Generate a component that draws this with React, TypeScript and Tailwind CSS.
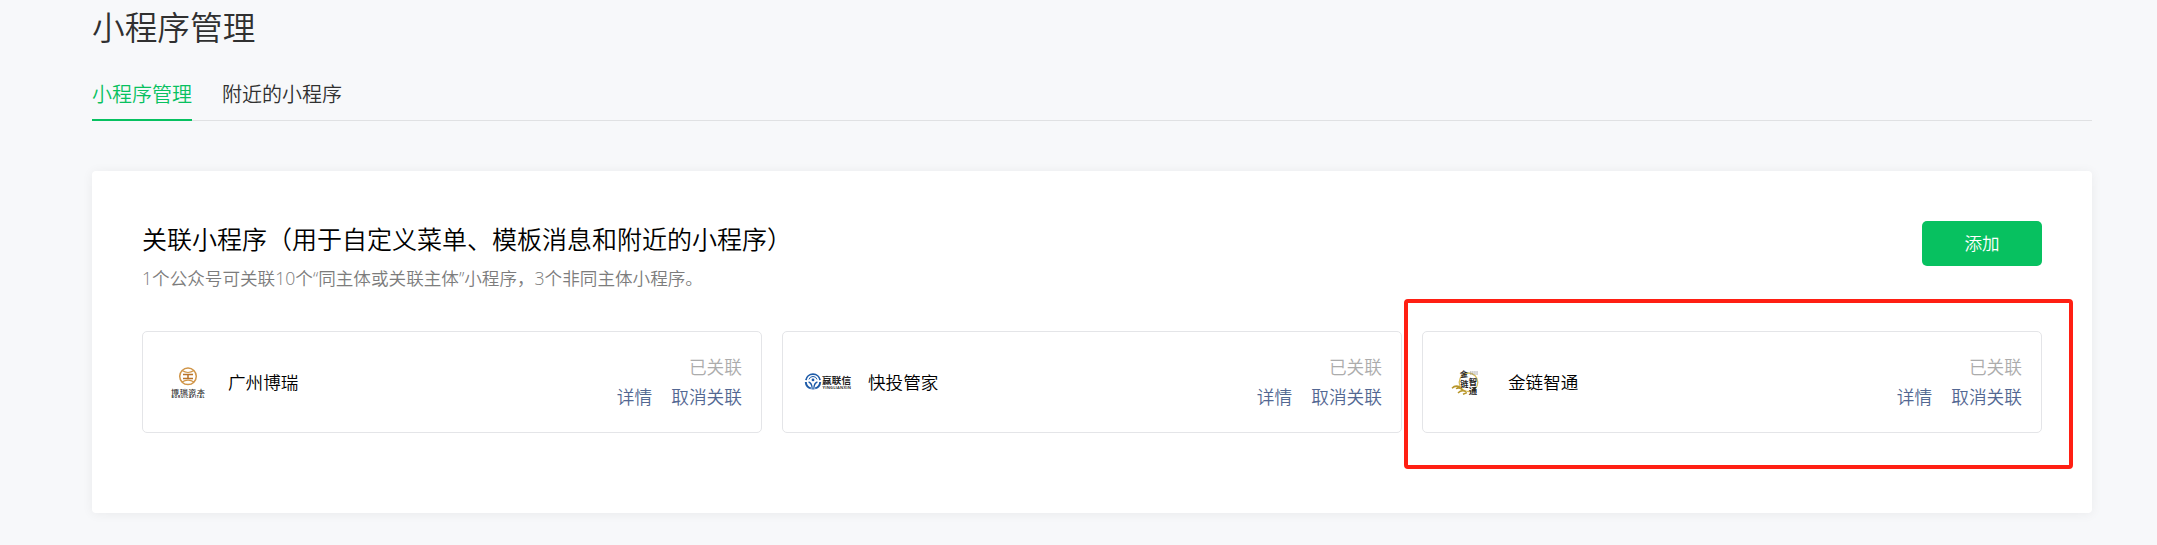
import * as React from 'react';

function BoruiLogo() {
    return (
        <svg viewBox="0 0 50 50" className="w-[50px] h-[50px] shrink-0">
            <circle cx="25" cy="19.3" r="8.3" fill="none" stroke="#d09548" strokeWidth="1.5" />
            <path d="M19 13.6Q25 17.4 31 13.6M19 25Q25 21.2 31 25" fill="none" stroke="#d09548" strokeWidth="1.2" />
            <path d="M20 17.6h10M20 21.4h10M25 17.6v3.8" fill="none" stroke="#b9732a" strokeWidth="1.5" />
            <text transform="translate(8 36.8) scale(1 0.72)" fontSize="8" textLength="34" fontWeight="500" fill="#333">博瑞资本</text>
            <text x="8.5" y="41" fontSize="3.4" textLength="33" fontWeight="700" fill="#222">BORUICAPITAL</text>
        </svg>
    );
}

function YinglianLogo() {
    return (
        <svg viewBox="0 0 50 50" className="w-[50px] h-[50px] shrink-0">
            <g fill="none" stroke="#1d5ba8">
                <path d="M2.9 23.2A7.2 7.2 0 0 1 17.1 23.2" strokeWidth="1.7" />
                <path d="M2.8 25A7.2 7.2 0 0 0 7.8 31.4M12.2 31.4A7.2 7.2 0 0 0 17.2 25" strokeWidth="2" />
                <path d="M6 22.4A4.2 4.2 0 0 1 14 22.4" strokeWidth="1" />
                <path d="M5.6 25Q9.2 26 9.2 32.4M14.4 25Q10.8 26 10.8 32.4" strokeWidth="1.3" />
            </g>
            <circle cx="10" cy="22.9" r="1.4" fill="#1d5ba8" />
            <text x="19" y="27.2" fontSize="9.6" textLength="29" fontWeight="700" fill="#222">赢联信</text>
            <text x="19.5" y="32" fontSize="4" textLength="28.5" fontWeight="700" fill="#333">YINGLIANXIN</text>
        </svg>
    );
}

function JinlianLogo() {
    return (
        <svg viewBox="0 0 50 50" className="w-[50px] h-[50px] shrink-0">
            <circle cx="25.5" cy="25.3" r="9.3" fill="none" stroke="#d8bd5c" strokeWidth="1.3" />
            <path d="M9 31.2Q12.5 27.6 17 30.2M13 31.6Q17 29.6 19.5 33M15 36Q18.5 32.6 23 34.6M20 37.2L24 35.6" fill="none" stroke="#b8962a" strokeWidth="1.5" />
            <g fontWeight="700" fill="#1c1c1c">
                <text transform="translate(17.2 20.4) rotate(-6)" fontSize="8">金</text>
                <text x="17.3" y="29.6" fontSize="8.2">链</text>
                <text x="25.8" y="28.4" fontSize="8.4">智</text>
                <text x="25.8" y="37.2" fontSize="8.4">通</text>
            </g>
            <path d="M27 15h8M27 17h8" stroke="#8c8c8c" strokeWidth="0.9" strokeDasharray="1.5 0.6" />
        </svg>
    );
}

const programs = [
    { name: '广州博瑞', logo: <BoruiLogo /> },
    { name: '快投管家', logo: <YinglianLogo /> },
    { name: '金链智通', logo: <JinlianLogo />, highlighted: true },
];

function ProgramCard({ name, logo, highlighted }: { name: string; logo: React.ReactNode; highlighted?: boolean }) {
    return (
        <div className="relative flex-1 h-[102px] flex items-center pl-5 pr-[19px] border border-[#e4e5e8] rounded-[5px]">
            {logo}
            <span className="ml-[15px] text-[17.6px] text-black">{name}</span>
            <div className="ml-auto flex flex-col items-end text-[17.7px] leading-[30px]">
                <span className="text-[#acacac]">已关联</span>
                <div className="flex gap-[19px] text-[#526792]">
                    <a href="#">详情</a>
                    <a href="#">取消关联</a>
                </div>
            </div>
            {highlighted && (
                <div className="absolute -left-[19px] -top-[33px] w-[669px] h-[170px] border-4 border-[#ff1f13] rounded-[4px] pointer-events-none" />
            )}
        </div>
    );
}

export default function App() {
    return (
        <div className="h-[545px] overflow-hidden bg-[#f7f8fa] pl-[92px] font-['Open_Sans','Noto_Sans_CJK_SC',sans-serif] font-[350]">
            <div className="w-[2000px]">
                <h1 className="h-[69px] pt-[5px] text-[32.7px] leading-[46px] font-[350] text-[#303030]">小程序管理</h1>

                <nav className="flex gap-[30px] h-[52px] border-b border-[#e0e1e3] text-[20px] leading-[51px] text-[#303030]">
                    <a href="#" className="h-[52px] border-b-2 border-[#07c160] text-[#07c160]">小程序管理</a>
                    <a href="#">附近的小程序</a>
                </nav>

                <section className="mt-[50px] h-[342px] px-[50px] pt-[50px] bg-white rounded-[4px] shadow-[0_1px_12px_rgba(0,0,0,0.06)]">
                    <div className="flex justify-between h-[110px]">
                        <div>
                            <h2 className="text-[25px] leading-[36px] font-[350] text-black">关联小程序（用于自定义菜单、模板消息和附近的小程序）</h2>
                            <p className="mt-[7px] text-[17.6px] leading-[28px] text-[#7c7c7c]">1个公众号可关联10个“同主体或关联主体”小程序，3个非同主体小程序。</p>
                        </div>
                        <button className="w-[120px] h-[45px] rounded-[5px] bg-[#07c160] text-[17.6px] text-white">添加</button>
                    </div>
                    <div className="flex gap-5">
                        {programs.map((p) => (
                            <ProgramCard key={p.name} {...p} />
                        ))}
                    </div>
                </section>
            </div>
        </div>
    );
}
